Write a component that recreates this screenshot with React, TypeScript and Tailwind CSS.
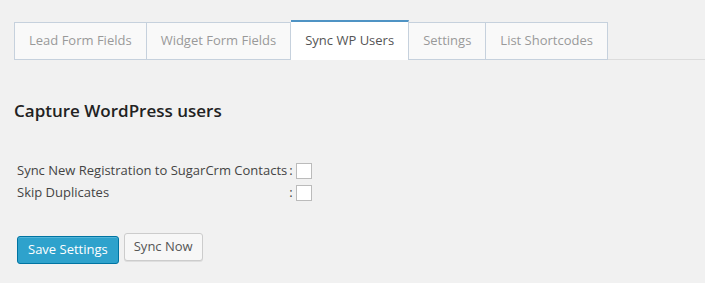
import React, { useState } from 'react';

const tabs = ['Lead Form Fields', 'Widget Form Fields', 'Sync WP Users', 'Settings', 'List Shortcodes'];

const App = () => {
    const [active, setActive] = useState('Sync WP Users');
    const [syncNew, setSyncNew] = useState(false);
    const [skipDup, setSkipDup] = useState(false);

    return (
        <div className="h-[283px] w-full bg-[#f1f1f1] font-['Open_Sans',sans-serif] text-[#444] overflow-hidden">
            <div className="pt-[20px] pl-[14px]">
                <div className="flex items-end border-b border-[#dcdcdc]">
                    {tabs.map((t, i) => {
                        const on = t === active;
                        return (
                            <button
                                key={t}
                                onClick={() => setActive(t)}
                                className={
                                    on
                                        ? "-mb-px h-[40px] px-[14px] bg-white border-x border-[#c6d1dd] border-t-2 border-t-[#4f93c4] text-[13px] text-[#555] " + (i === 0 ? '' : 'border-l-0')
                                        : "-mb-px h-[38px] px-[14px] bg-[#f9f9f9] border border-[#c6d1dd] text-[13px] text-[#999] " + (i === 0 ? '' : 'border-l-0')
                                }
                            >
                                {t}
                            </button>
                        );
                    })}
                </div>
            </div>

            <h2 className="mt-[39px] ml-[14px] text-[17px] font-semibold text-[#222] leading-[24px]">Capture WordPress users</h2>

            <table className="mt-[37px] ml-[15px] text-[13px] text-[#444] border-separate border-spacing-0">
                <tbody>
                    <tr>
                        <td className="pl-[2px] pr-[2px] h-[22px]">Sync New Registration to SugarCrm Contacts</td>
                        <td className="h-[22px]">
                            <span className="flex items-center">
                                <span className="mr-[3px]">:</span>
                                <input type="checkbox" checked={syncNew} onChange={() => setSyncNew(!syncNew)} className="appearance-none w-[16px] h-[16px] bg-white border border-[#bbb] checked:bg-[#2ea2cc]" />
                            </span>
                        </td>
                    </tr>
                    <tr>
                        <td className="pl-[2px] pr-[2px] h-[22px]">Skip Duplicates</td>
                        <td className="h-[22px]">
                            <span className="flex items-center">
                                <span className="mr-[3px]">:</span>
                                <input type="checkbox" checked={skipDup} onChange={() => setSkipDup(!skipDup)} className="appearance-none w-[16px] h-[16px] bg-white border border-[#bbb] checked:bg-[#2ea2cc]" />
                            </span>
                        </td>
                    </tr>
                </tbody>
            </table>

            <div className="mt-[29px] ml-[17px] flex items-start gap-[5px]">
                <button className="mt-[3px] h-[28px] px-[10px] rounded-[3px] bg-[#2ea2cc] border border-[#0074a2] text-white text-[13px] shadow-[inset_0_1px_0_rgba(120,200,230,0.5)]">
                    Save Settings
                </button>
                <button className="h-[28px] px-[9px] rounded-[3px] bg-[#f7f7f7] border border-[#cccccc] text-[#555] text-[13px] shadow-[0_1px_0_rgba(0,0,0,0.08)]">
                    Sync Now
                </button>
            </div>
        </div>
    );
};

export default App;
